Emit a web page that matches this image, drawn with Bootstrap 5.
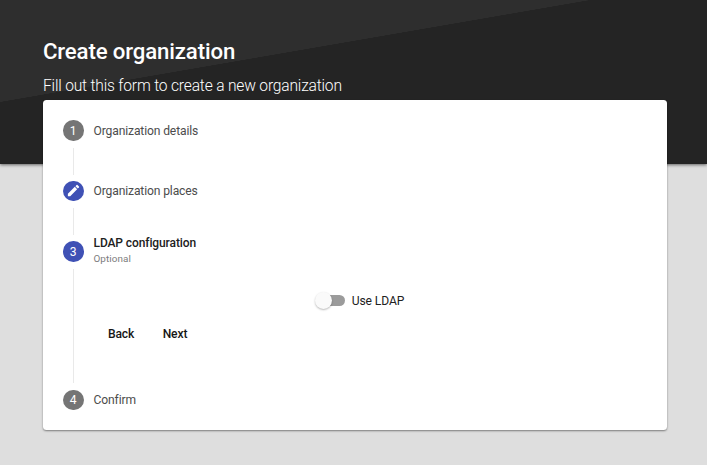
<!DOCTYPE html>
<html lang="en">
<head>
<meta charset="utf-8">
<meta name="viewport" content="width=device-width, initial-scale=1">
<title>Create organization</title>
<link href="https://cdn.jsdelivr.net/npm/bootstrap@5.3.0/dist/css/bootstrap.min.css" rel="stylesheet">
<style>
body { font-family: Roboto, "Liberation Sans", sans-serif; background: #dedede; color: #212121; height: 465px; overflow: hidden; }
.hero { height: 164px; padding: 37px 43px 0; color: #fff; box-shadow: 0 1px 3px rgba(0,0,0,.55);
  background: linear-gradient(to bottom right, #2e2e2e 49.9%, #242424 50.1%) 0 0 / 590px 102px no-repeat #242424; }
.hero h1 { font-size: 22.2px; line-height: 28px; font-weight: 500; letter-spacing: -.13px; }
.hero p { font-size: 15.6px; line-height: 20px; font-weight: 300; letter-spacing: -.19px; margin-top: 11px; }
.panel { margin: -64px 40px 0 43px; height: 330px; border: 0; border-radius: 3.5px; padding: 20px 20px 0; box-shadow: 0 1px 2px rgba(0,0,0,.45); }
.step { gap: 10px; height: 20.5px; font-size: 12.1px; line-height: 16px; color: #4c4c4c; }
.step-name { letter-spacing: -.13px; padding-top: 1px; }
.step-dot { width: 20.5px; height: 20.5px; padding-top: 1px; background: #757575; color: #fff; }
.step-dot.on { background: #3f51b5; }
.step-dot svg { margin-top: -1px; }
.step-body { margin-left: 10px; border-left: 1px solid #e9e9e9; }
.short { height: 27px; margin-top: 7px; margin-bottom: 6px; }
.long { height: 114px; margin-top: 7px; margin-bottom: 7px; padding-top: 24px; }
.active-title { color: #212121; font-weight: 500; font-size: 12px; letter-spacing: -.1px; }
.hint { font-size: 9.9px; letter-spacing: .08px; color: #7d7d7d; }
.switch { gap: 7px; font-size: 12.1px; line-height: 16px; letter-spacing: -.1px; margin-left: -1px; }
.track { width: 26px; height: 11.5px; background: #9b9b9b; margin-left: 3px; }
.thumb { width: 17px; height: 17px; background: #fafafa; margin-left: -4px; box-shadow: 0 1px 2px rgba(0,0,0,.28); flex: none; }
.actions { gap: 28.5px; margin: 17px 0 0 34px; }
.flat { font-size: 12.1px; line-height: 16px; font-weight: 500; letter-spacing: -.15px; color: #161616; }
</style>
</head>
<body>
<header class="hero">
  <h1 class="mb-0">Create organization</h1>
  <p class="mb-0">Fill out this form to create a new organization</p>
</header>
<main class="panel card">
  <div class="step d-flex align-items-center">
    <span class="step-dot rounded-circle d-flex align-items-center justify-content-center">1</span>
    <span class="step-name">Organization details</span>
  </div>
  <div class="step-body short"></div>
  <div class="step d-flex align-items-center">
    <span class="step-dot on rounded-circle d-flex align-items-center justify-content-center">
      <svg width="15" height="15" viewBox="0 0 24 24" fill="currentColor" aria-hidden="true"><path d="M3 17.25V21h3.75L17.81 9.94l-3.75-3.75L3 17.25zM20.71 7.04a1 1 0 0 0 0-1.41l-2.34-2.34a1 1 0 0 0-1.41 0l-1.83 1.83 3.75 3.75 1.83-1.83z"/></svg>
    </span>
    <span class="step-name">Organization places</span>
  </div>
  <div class="step-body short"></div>
  <div class="step d-flex align-items-center">
    <span class="step-dot on rounded-circle d-flex align-items-center justify-content-center">3</span>
    <div class="d-flex flex-column">
      <span class="active-title">LDAP configuration</span>
      <span class="hint">Optional</span>
    </div>
  </div>
  <div class="step-body long">
    <label class="switch d-flex align-items-center justify-content-center" role="switch">
      <span class="track rounded-pill d-flex align-items-center"><span class="thumb rounded-circle"></span></span>
      <span>Use LDAP</span>
    </label>
    <div class="actions d-flex">
      <button type="button" class="btn flat border-0 p-0">Back</button>
      <button type="button" class="btn flat border-0 p-0">Next</button>
    </div>
  </div>
  <div class="step d-flex align-items-center">
    <span class="step-dot rounded-circle d-flex align-items-center justify-content-center">4</span>
    <span class="step-name">Confirm</span>
  </div>
</main>
<script src="https://cdn.jsdelivr.net/npm/bootstrap@5.3.0/dist/js/bootstrap.bundle.min.js"></script>
</body>
</html>
